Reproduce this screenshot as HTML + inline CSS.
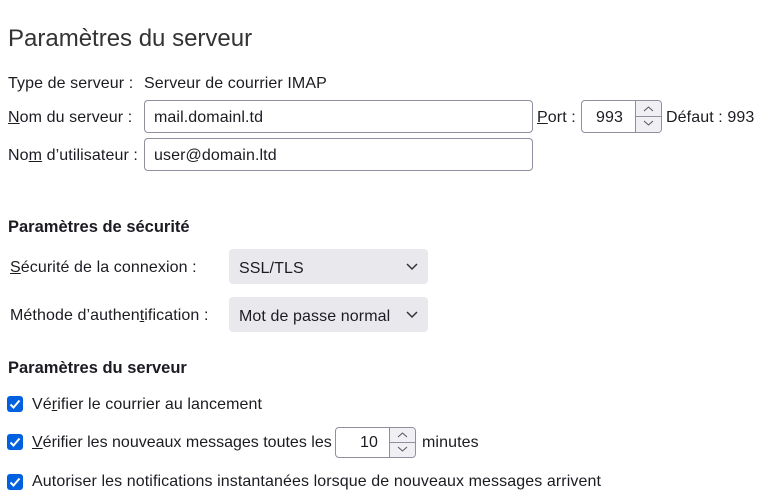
<!DOCTYPE html>
<html><head><meta charset="utf-8"><style>
body{margin:0;width:771px;height:482px;overflow:hidden;background:#fff;font-family:"Liberation Sans",sans-serif;color:#1c1b22;font-size:16px;letter-spacing:0.1px;position:relative}
.a{position:absolute;white-space:nowrap}
.in{position:absolute;border:1px solid #8f8f9d;border-radius:4px;background:#fff;box-sizing:border-box;padding-left:9px;padding-top:2px;line-height:30px;overflow:hidden}
.sel{position:absolute;background:#e9e9ed;border-radius:4px;box-sizing:border-box;padding-left:10px;padding-top:2px;line-height:35px}
.sel svg{position:absolute;right:10px;top:14px}
.cb{position:absolute;width:16px;height:16px;background:#0061e0;border-radius:3px}
.spin{position:absolute;right:0;top:0;bottom:0;width:25px;border-left:1px solid #8f8f9d;background:#f0f0f4}
.spin div{height:50%;box-sizing:border-box;position:relative;overflow:hidden}
.spin div:first-child{border-bottom:1px solid #8f8f9d}
.spin svg{position:absolute;left:0;top:0}
b{font-weight:bold}
</style></head><body>
<div class="a" style="left:8px;top:25px;font-size:24px;font-weight:300;color:#333;letter-spacing:0">Paramètres du serveur</div>
<div class="a" style="left:8px;top:75px">Type de serveur :</div>
<div class="a" style="left:144px;top:75px">Serveur de courrier IMAP</div>
<div class="a" style="left:8px;top:109px"><u>N</u>om du serveur :</div>
<div class="in" style="left:144px;top:100px;width:389px;height:33px">mail.domainl.td</div>
<div class="a" style="left:537px;top:109px"><u>P</u>ort :</div>
<div class="in" style="left:581px;top:100px;width:81px;height:33px;padding-left:14px">993
<div class="spin"><div><svg width="25" height="15"><path d="M8 10l4.5-4 4.5 4" fill="none" stroke="#555"/></svg></div><div><svg width="25" height="15"><path d="M8 4l4.5 4 4.5-4" fill="none" stroke="#555"/></svg></div></div></div>
<div class="a" style="left:666px;top:109px">Défaut : 993</div>
<div class="a" style="left:8px;top:147px">No<u>m</u> d’utilisateur :</div>
<div class="in" style="left:144px;top:138px;width:389px;height:33px">user@domain.ltd</div>
<div class="a" style="left:8px;top:218px;font-size:16.5px;letter-spacing:0"><b>Paramètres de sécurité</b></div>
<div class="a" style="left:10px;top:259px"><u>S</u>écurité de la connexion :</div>
<div class="sel" style="left:229px;top:249px;width:199px;height:35px">SSL/TLS<svg width="12" height="8"><path d="M1 1l5 5 5-5" fill="none" stroke="#333" stroke-width="1.5"/></svg></div>
<div class="a" style="left:10px;top:307px">Méthode d’authen<u>t</u>ification :</div>
<div class="sel" style="left:229px;top:297px;width:199px;height:35px">Mot de passe normal<svg width="12" height="8"><path d="M1 1l5 5 5-5" fill="none" stroke="#333" stroke-width="1.5"/></svg></div>
<div class="a" style="left:8px;top:359px;font-size:16.5px;letter-spacing:0"><b>Paramètres du serveur</b></div>
<div class="cb" style="left:7px;top:396px"><svg width="16" height="16"><path d="M3.5 8.5l3 3 6-7" fill="none" stroke="#fff" stroke-width="2"/></svg></div>
<div class="a" style="left:32px;top:396px">Vé<u>r</u>ifier le courrier au lancement</div>
<div class="cb" style="left:7px;top:434px"><svg width="16" height="16"><path d="M3.5 8.5l3 3 6-7" fill="none" stroke="#fff" stroke-width="2"/></svg></div>
<div class="a" style="left:32px;top:434px;letter-spacing:0"><u>V</u>érifier les nouveaux messages toutes les</div>
<div class="in" style="left:335px;top:427px;width:81px;height:31px;padding-left:24px;padding-top:1px;line-height:28px">10
<div class="spin"><div><svg width="25" height="14"><path d="M8 9l4.5-4 4.5 4" fill="none" stroke="#555"/></svg></div><div><svg width="25" height="14"><path d="M8 4l4.5 4 4.5-4" fill="none" stroke="#555"/></svg></div></div></div>
<div class="a" style="left:422px;top:434px">minutes</div>
<div class="cb" style="left:7px;top:474px"><svg width="16" height="16"><path d="M3.5 8.5l3 3 6-7" fill="none" stroke="#fff" stroke-width="2"/></svg></div>
<div class="a" style="left:32px;top:473px">Autoriser les notifications instantanées lorsque de nouveaux messages arrivent</div>
</body></html>
